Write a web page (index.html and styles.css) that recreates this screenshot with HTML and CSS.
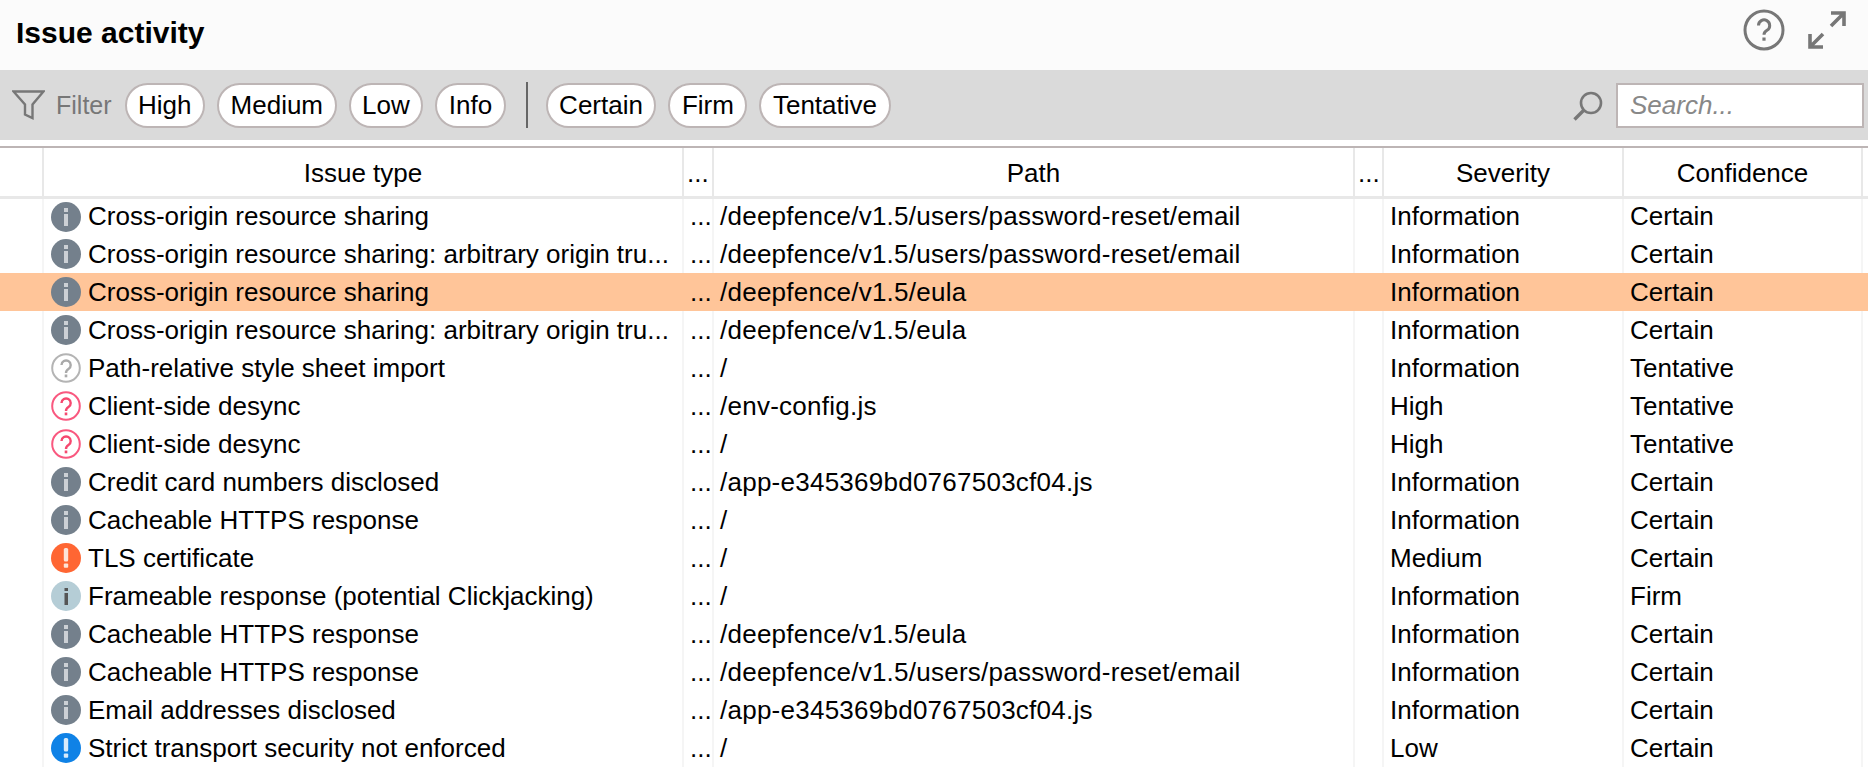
FILE: index.html
```html
<!DOCTYPE html>
<html lang="en">
<head>
    <meta charset="UTF-8">
    <title>Issue activity</title>
    <link rel="stylesheet" href="styles.css">
</head>
<body>
    <svg class="defs" width="0" height="0">
        <symbol id="i-info" viewBox="0 0 30 30">
            <circle cx="15" cy="15" r="15" fill="#74808c"/>
            <rect x="13" y="12" width="4" height="12" fill="#ccd0d5"/>
            <rect x="13" y="6" width="4" height="4" fill="#ccd0d5"/>
        </symbol>
        <symbol id="i-firm" viewBox="0 0 30 30">
            <circle cx="15" cy="15" r="15" fill="#b5cdd6"/>
            <rect x="13.5" y="12" width="3.5" height="12" fill="#555"/>
            <rect x="13.5" y="7" width="3.5" height="3" fill="#555"/>
        </symbol>
        <symbol id="i-grey" viewBox="0 0 30 30">
            <circle cx="15" cy="15" r="13.8" fill="#fff" stroke="#b4b4b4" stroke-width="2"/>
            <path d="M10.5 12 a4.6 4.6 0 1 1 7 4 q-2.5 1.5 -2.5 4" fill="none" stroke="#aaa" stroke-width="2.4"/>
            <rect x="13.7" y="21.5" width="2.6" height="2.8" fill="#aaa"/>
        </symbol>
        <symbol id="i-red" viewBox="0 0 30 30">
            <circle cx="15" cy="15" r="13.8" fill="#fff" stroke="#f9587f" stroke-width="2"/>
            <path d="M10.5 12 a4.6 4.6 0 1 1 7 4 q-2.5 1.5 -2.5 4" fill="none" stroke="#f6486f" stroke-width="2.4"/>
            <rect x="13.7" y="21.5" width="2.6" height="2.8" fill="#f6486f"/>
        </symbol>
        <symbol id="i-medium" viewBox="0 0 30 30">
            <circle cx="15" cy="15" r="15" fill="#ff6633"/>
            <rect x="12.8" y="5" width="4.4" height="13.5" rx="1.5" fill="#fde3d8"/>
            <rect x="12.8" y="20.5" width="4.4" height="4.2" rx="1" fill="#fde3d8"/>
        </symbol>
        <symbol id="i-low" viewBox="0 0 30 30">
            <circle cx="15" cy="15" r="15" fill="#0f82e6"/>
            <rect x="12.8" y="5" width="4.4" height="13.5" rx="1.5" fill="#d8ebfb"/>
            <rect x="12.8" y="20.5" width="4.4" height="4.2" rx="1" fill="#d8ebfb"/>
        </symbol>
    </svg>

    <div class="titlebar">
        <h1 class="title">Issue activity</h1>
        <div class="title-icons">
            <svg class="help" width="42" height="42" viewBox="0 0 42 42">
                <circle cx="21" cy="21" r="19" fill="none" stroke="#777" stroke-width="3"/>
                <path d="M15.5 16.5 a5.6 5.6 0 1 1 8.5 4.8 q-3 1.8 -3 4.5" fill="none" stroke="#777" stroke-width="3"/>
                <rect x="19.4" y="28.5" width="3.2" height="3.2" fill="#777"/>
            </svg>
            <svg class="expand" width="40" height="40" viewBox="0 0 40 40">
                <path d="M3 37 L16 24 M3 24 V37 H16 M24 16 L37 3 M24 3 H37 V16" fill="none" stroke="#777" stroke-width="3.6"/>
            </svg>
        </div>
    </div>

    <div class="filterbar">
        <svg class="funnel" width="33" height="30" viewBox="0 0 33 30">
            <path d="M1.5 1.5 H31.5 L20.5 14.5 V28 L13 24.5 V14.5 Z" fill="none" stroke="#777" stroke-width="2.4"/>
        </svg>
        <span class="filter-label">Filter</span>
        <div class="pills">
            <span class="pill">High</span>
            <span class="pill">Medium</span>
            <span class="pill">Low</span>
            <span class="pill">Info</span>
            <span class="sep"></span>
            <span class="pill">Certain</span>
            <span class="pill">Firm</span>
            <span class="pill">Tentative</span>
        </div>
        <div class="search">
            <svg width="30" height="30" viewBox="0 0 30 30">
                <circle cx="18" cy="12" r="10" fill="none" stroke="#777" stroke-width="2.6"/>
                <path d="M11 19 L1.5 28.5" fill="none" stroke="#777" stroke-width="3.4"/>
            </svg>
            <input class="search-input" type="text" placeholder="Search...">
        </div>
    </div>

    <div class="table-wrap">
        <table class="issues">
            <colgroup>
                <col class="c-num"><col class="c-type"><col class="c-dots"><col class="c-path"><col class="c-dots2"><col class="c-sev"><col class="c-conf"><col>
            </colgroup>
            <thead>
                <tr>
                    <th></th><th>Issue type</th><th class="dots">...</th><th>Path</th><th class="dots">...</th><th>Severity</th><th>Confidence</th><th></th>
                </tr>
            </thead>
            <tbody>
                <tr><td></td><td><div class="type"><svg class="ico"><use href="#i-info"/></svg>Cross-origin resource sharing</div></td><td class="more">...</td><td class="path">/deepfence/v1.5/users/password-reset/email</td><td></td><td>Information</td><td>Certain</td><td></td></tr>
                <tr><td></td><td><div class="type"><svg class="ico"><use href="#i-info"/></svg>Cross-origin resource sharing: arbitrary origin tru...</div></td><td class="more">...</td><td class="path">/deepfence/v1.5/users/password-reset/email</td><td></td><td>Information</td><td>Certain</td><td></td></tr>
                <tr class="selected"><td></td><td><div class="type"><svg class="ico"><use href="#i-info"/></svg>Cross-origin resource sharing</div></td><td class="more">...</td><td class="path">/deepfence/v1.5/eula</td><td></td><td>Information</td><td>Certain</td><td></td></tr>
                <tr><td></td><td><div class="type"><svg class="ico"><use href="#i-info"/></svg>Cross-origin resource sharing: arbitrary origin tru...</div></td><td class="more">...</td><td class="path">/deepfence/v1.5/eula</td><td></td><td>Information</td><td>Certain</td><td></td></tr>
                <tr><td></td><td><div class="type"><svg class="ico"><use href="#i-grey"/></svg>Path-relative style sheet import</div></td><td class="more">...</td><td class="path">/</td><td></td><td>Information</td><td>Tentative</td><td></td></tr>
                <tr><td></td><td><div class="type"><svg class="ico"><use href="#i-red"/></svg>Client-side desync</div></td><td class="more">...</td><td class="path">/env-config.js</td><td></td><td>High</td><td>Tentative</td><td></td></tr>
                <tr><td></td><td><div class="type"><svg class="ico"><use href="#i-red"/></svg>Client-side desync</div></td><td class="more">...</td><td class="path">/</td><td></td><td>High</td><td>Tentative</td><td></td></tr>
                <tr><td></td><td><div class="type"><svg class="ico"><use href="#i-info"/></svg>Credit card numbers disclosed</div></td><td class="more">...</td><td class="path">/app-e345369bd0767503cf04.js</td><td></td><td>Information</td><td>Certain</td><td></td></tr>
                <tr><td></td><td><div class="type"><svg class="ico"><use href="#i-info"/></svg>Cacheable HTTPS response</div></td><td class="more">...</td><td class="path">/</td><td></td><td>Information</td><td>Certain</td><td></td></tr>
                <tr><td></td><td><div class="type"><svg class="ico"><use href="#i-medium"/></svg>TLS certificate</div></td><td class="more">...</td><td class="path">/</td><td></td><td>Medium</td><td>Certain</td><td></td></tr>
                <tr><td></td><td><div class="type"><svg class="ico"><use href="#i-firm"/></svg>Frameable response (potential Clickjacking)</div></td><td class="more">...</td><td class="path">/</td><td></td><td>Information</td><td>Firm</td><td></td></tr>
                <tr><td></td><td><div class="type"><svg class="ico"><use href="#i-info"/></svg>Cacheable HTTPS response</div></td><td class="more">...</td><td class="path">/deepfence/v1.5/eula</td><td></td><td>Information</td><td>Certain</td><td></td></tr>
                <tr><td></td><td><div class="type"><svg class="ico"><use href="#i-info"/></svg>Cacheable HTTPS response</div></td><td class="more">...</td><td class="path">/deepfence/v1.5/users/password-reset/email</td><td></td><td>Information</td><td>Certain</td><td></td></tr>
                <tr><td></td><td><div class="type"><svg class="ico"><use href="#i-info"/></svg>Email addresses disclosed</div></td><td class="more">...</td><td class="path">/app-e345369bd0767503cf04.js</td><td></td><td>Information</td><td>Certain</td><td></td></tr>
                <tr><td></td><td><div class="type"><svg class="ico"><use href="#i-low"/></svg>Strict transport security not enforced</div></td><td class="more">...</td><td class="path">/</td><td></td><td>Low</td><td>Certain</td><td></td></tr>
            </tbody>
        </table>
    </div>
</body>
</html>
```

FILE: styles.css
```css
html, body {
    height: 100%;
}
body {
    font-family: "Liberation Sans", Arial, sans-serif;
    font-size: 26px;
    margin: 0;
    padding: 0;
    background-color: #ffffff;
    color: #000;
    overflow: hidden;
}
.defs {
    position: absolute;
}
.titlebar {
    display: flex;
    align-items: center;
    justify-content: space-between;
    height: 70px;
    padding: 0 21px 0 16px;
    box-sizing: border-box;
    background-color: #fbfbfb;
}
.title {
    margin: 0 0 4px;
    font-size: 30px;
    font-weight: bold;
}
.title-icons {
    display: flex;
    align-items: center;
    gap: 22px;
    margin-bottom: 10px;
}
.filterbar {
    display: flex;
    align-items: center;
    height: 70px;
    padding: 0 4px 0 12px;
    box-sizing: border-box;
    background-color: #dadada;
}
.filter-label {
    margin-left: 11px;
    color: #777;
    font-size: 25px;
}
.pills {
    display: flex;
    align-items: center;
    gap: 12px;
    margin-left: 13px;
}
.pill {
    height: 45px;
    line-height: 41px;
    padding: 0 11.5px;
    box-sizing: border-box;
    border: 2px solid #bdb5b5;
    border-radius: 23px;
    background-color: #ffffff;
}
.sep {
    width: 2px;
    height: 46px;
    margin: 0 6px 0 8px;
    background-color: #666;
}
.search {
    display: flex;
    align-items: center;
    gap: 13px;
    margin-left: auto;
}
.search svg {
    margin-top: 2px;
}
.search-input {
    width: 248px;
    height: 45px;
    padding: 0 12px;
    box-sizing: border-box;
    border: 2px solid #bdb5b5;
    border-radius: 0;
    background-color: #ffffff;
    font-family: inherit;
    font-size: 26px;
    font-style: italic;
}
.search-input::placeholder {
    color: #888;
    opacity: 1;
}
.table-wrap {
    margin-top: 6px;
    border-top: 2px solid #bdb5b5;
}
.issues {
    width: 100%;
    border-collapse: collapse;
    table-layout: fixed;
}
.c-num { width: 43px; }
.c-type { width: 640px; }
.c-dots { width: 30px; }
.c-path { width: 641px; }
.c-dots2 { width: 29px; }
.c-sev { width: 240px; }
.c-conf { width: 239px; }
.issues th {
    height: 49px;
    padding: 4px 0 0;
    font-weight: normal;
    text-align: center;
    border-right: 2px solid #e8e8e8;
    border-bottom: 3px solid #e8e8e8;
    box-sizing: border-box;
}
.issues th:last-child {
    border-right: none;
}
.issues th.dots {
    text-align: left;
    padding-left: 3px;
}
.issues td {
    height: 38px;
    padding: 0 0 0 6px;
    border-right: 2px solid #f5f5f5;
    box-sizing: border-box;
    white-space: nowrap;
    overflow: hidden;
}
.issues td:last-child {
    border-right: none;
}
.issues td.path {
    letter-spacing: .25px;
}
.type {
    display: flex;
    align-items: center;
    gap: 7px;
    padding-left: 1px;
}
.ico {
    width: 30px;
    height: 30px;
    flex: none;
}
.selected td {
    background-color: #ffc599;
    border-right-color: #ffc599;
}
```
